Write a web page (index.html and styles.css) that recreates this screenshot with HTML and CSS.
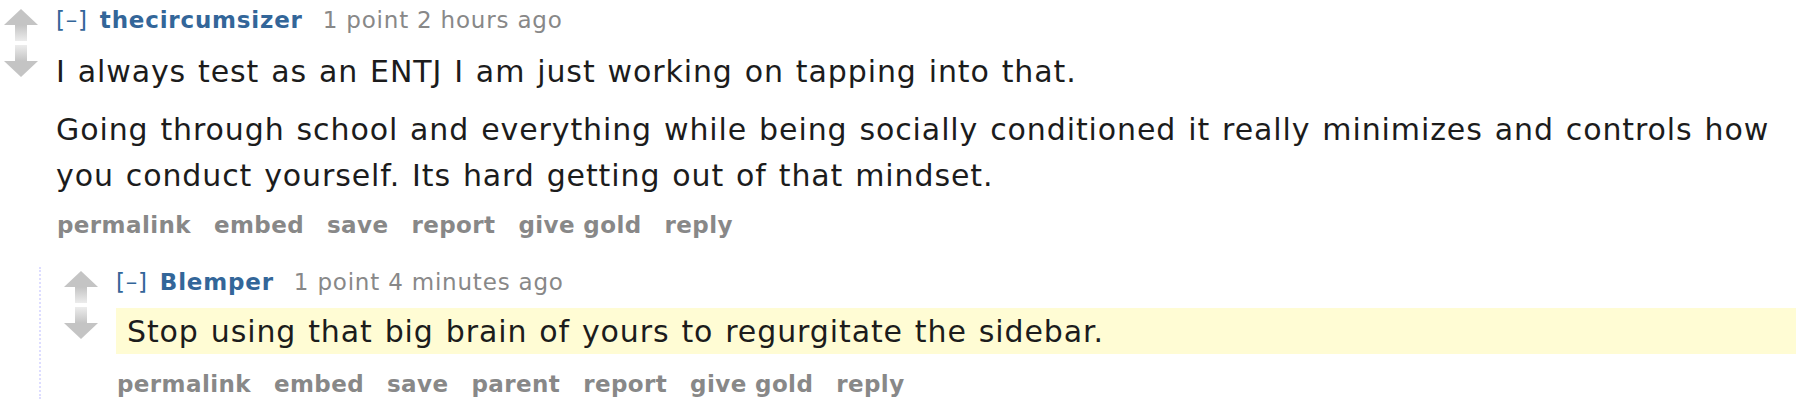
FILE: index.html
```html
<!DOCTYPE html>
<html>
<head>
<meta charset="utf-8">
<link rel="stylesheet" href="styles.css">
</head>
<body>
<div class="page">
  <div class="comment">
    <div class="midcol">
      <svg class="arrow" width="34" height="32" viewBox="0 0 34 32">
        <defs>
          <linearGradient id="fadeDown" x1="0" y1="0" x2="0" y2="1">
            <stop offset="0" stop-color="#c4c4c4"/>
            <stop offset="1" stop-color="#ececec"/>
          </linearGradient>
          <linearGradient id="fadeUp" x1="0" y1="1" x2="0" y2="0">
            <stop offset="0" stop-color="#c4c4c4"/>
            <stop offset="1" stop-color="#ececec"/>
          </linearGradient>
        </defs>
        <polygon points="17,0 34,16 0,16" fill="#c4c4c4"/>
        <rect x="11" y="16" width="12" height="16" fill="url(#fadeDown)"/>
      </svg>
      <svg class="arrow" width="34" height="32" viewBox="0 0 34 32">
        <rect x="11" y="0" width="12" height="16" fill="url(#fadeUp)"/>
        <polygon points="0,16 34,16 17,32" fill="#c4c4c4"/>
      </svg>
    </div>
    <div class="entry">
      <p class="tagline"><a class="expand">[–]</a><a class="author">thecircumsizer</a><span class="score">1 point</span> 2 hours ago</p>
      <div class="md">
        <p>I always test as an ENTJ I am just working on tapping into that.</p>
        <p>Going through school and everything while being socially conditioned it really minimizes and controls how you conduct yourself. Its hard getting out of that mindset.</p>
      </div>
      <ul class="buttons">
        <li>permalink</li><li>embed</li><li>save</li><li>report</li><li>give gold</li><li>reply</li>
      </ul>
    </div>
    <div class="child">
      <div class="comment">
        <div class="midcol">
          <svg class="arrow" width="34" height="32" viewBox="0 0 34 32">
            <polygon points="17,0 34,16 0,16" fill="#c4c4c4"/>
            <rect x="11" y="16" width="12" height="16" fill="url(#fadeDown)"/>
          </svg>
          <svg class="arrow" width="34" height="32" viewBox="0 0 34 32">
            <rect x="11" y="0" width="12" height="16" fill="url(#fadeUp)"/>
            <polygon points="0,16 34,16 17,32" fill="#c4c4c4"/>
          </svg>
        </div>
        <div class="entry">
          <p class="tagline"><a class="expand">[–]</a><a class="author">Blemper</a><span class="score">1 point</span> 4 minutes ago</p>
          <div class="md md-new">
            <p>Stop using that big brain of yours to regurgitate the sidebar.</p>
          </div>
          <ul class="buttons buttons-child">
            <li>permalink</li><li>embed</li><li>save</li><li>parent</li><li>report</li><li>give gold</li><li>reply</li>
          </ul>
        </div>
      </div>
    </div>
  </div>
</div>
</body>
</html>
```

FILE: styles.css
```css
html, body {
  margin: 0;
  padding: 0;
  background: #ffffff;
}

body {
  font-family: "DejaVu Sans", Verdana, sans-serif;
  color: #222222;
}

.page {
  padding: 5px 2px 0 4px;
}

.comment {
  display: grid;
  grid-template-columns: 52px 1fr;
}

.midcol {
  padding-top: 4px;
  display: flex;
  flex-direction: column;
  gap: 4px;
}

.arrow {
  display: block;
}

.entry {
  min-width: 0;
}

.tagline {
  margin: 0;
  font-size: 23px;
  line-height: 30px;
  letter-spacing: 0.8px;
  color: #888888;
  white-space: nowrap;
}

.expand {
  color: #369;
  margin-right: 12px;
}

.author {
  color: #369;
  font-weight: bold;
  margin-right: 20px;
}

.md {
  margin-top: 14px;
}

.md p {
  margin: 0;
  font-size: 30px;
  line-height: 46px;
  letter-spacing: 0.9px;
  word-spacing: 1.5px;
  color: #1c1c1c;
}

.md p + p {
  margin-top: 12px;
}

.md-new {
  margin-top: 11px;
  background: #fffcd4;
}

.md-new p {
  padding: 2px 0 0 11px;
  line-height: 44px;
}

.buttons {
  list-style: none;
  margin: 11px 0 0;
  padding: 0 0 0 1px;
  display: flex;
  gap: 23px;
  font-size: 23px;
  line-height: 30px;
  font-weight: bold;
  letter-spacing: 0.4px;
  color: #888888;
}

.buttons-child {
  margin-top: 15px;
}

.child {
  grid-column: 1 / -1;
  margin: 27px 0 0 35px;
  border-left: 2px dotted #ddddff;
  padding-left: 23px;
}
```
